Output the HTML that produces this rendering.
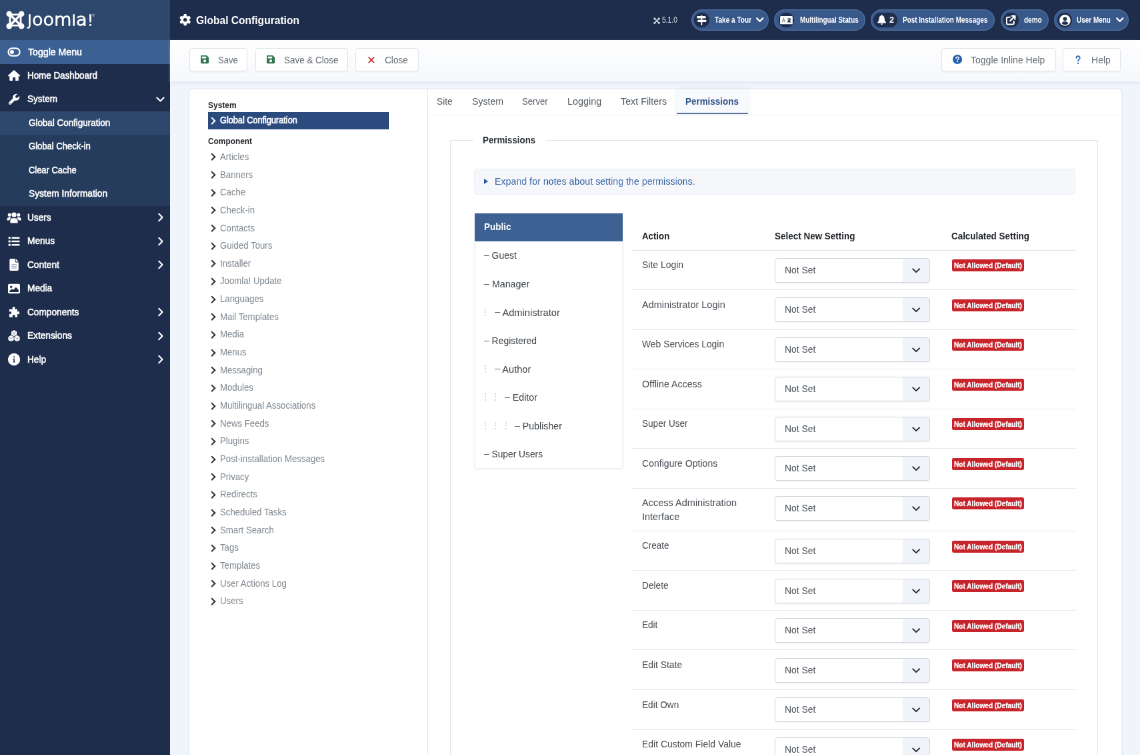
<!DOCTYPE html>
<html lang="en">
<head>
<meta charset="utf-8">
<title>Global Configuration - Administration</title>
<style>
*{box-sizing:border-box;margin:0;padding:0}
html,body{width:1140px;height:755px;overflow:hidden;background:#f0f4fb}
#app{position:absolute;left:0;top:0;width:1710px;height:1133px;overflow:hidden;transform:scale(.666667);transform-origin:0 0;will-change:transform;font-family:"Liberation Sans",Arial,sans-serif;font-size:15px;color:#495057;line-height:1.5}
ul{list-style:none}
svg{display:block;overflow:visible}
i{font-style:normal}
span,h3,.lab{transform-origin:0 50%}
span{display:inline-block}

/* ---------- header ---------- */
#header{position:absolute;left:0;top:0;width:1710px;height:60px;background:#1d2d4b;color:#fff}
#logo{position:absolute;left:0;top:0;width:255px;height:60px;background:#2e486d}
#logo svg{position:absolute;left:8.85px;top:16.2px}
#logo .word{position:absolute;left:41.1px;top:16.5px;font-family:"DejaVu Sans Light","DejaVu Sans",sans-serif;font-weight:200;font-size:24px;line-height:27px;color:#fff;-webkit-text-stroke:1.35px #fff;white-space:nowrap;transform:scaleX(1.13)}
#logo .word b{font-weight:200;font-size:20.7px}
#logo .reg{position:absolute;left:138.3px;top:19.8px;font-size:5.4px;line-height:6px;color:#dfe5ee}
#title{position:absolute;left:268.8px;top:1.05px;height:60px;display:flex;align-items:center;font-size:16.95px;font-weight:700;white-space:nowrap}
#title svg{margin-right:7.5px;position:relative;top:-0.9px}
.ver{position:absolute;left:979.5px;top:23.1px;height:15px;font-size:12px;line-height:15px;color:#e1e6ee;display:flex;align-items:center}
.ver svg{margin-right:3px}
.pill{position:absolute;top:13.95px;height:32.1px;border-radius:16.05px;background:#38588a;box-shadow:inset 0 0 0 1.5px rgba(130,160,205,.3);font-size:12.45px;font-weight:700;color:#fff;white-space:nowrap}
.pill .ic{position:absolute;left:4.5px;top:4.8px;height:22.5px;border-radius:11.25px;background:#1d2d4b;display:flex;align-items:center;justify-content:center}
.pill .ic b{font-size:12.9px;font-weight:700;margin-left:5.1px;line-height:22.5px}
.pill .tx{position:absolute;top:0;line-height:33px}
.pill .chev{position:absolute;right:7.8px;top:12.15px}

/* ---------- sidebar ---------- */
#sidebar{position:absolute;left:0;top:60px;width:255px;height:1072.5px;background:#1d2d4b;color:#fff}
#sidebar .row{position:relative;height:35.505px;font-size:14.7px;line-height:35.85px;white-space:nowrap;-webkit-text-stroke:0.6px #fff}
#sidebar .row span{position:absolute;top:0}
#sidebar .row.toggle{background:#3c6092;line-height:37.2px}
#sidebar .row.sub{background:#263c5c}
#sidebar .row.act{background:#2e486d}
#sidebar .row svg.i{position:absolute;left:21px;top:50%;transform:translate(-50%,-50%)}
#sidebar .row svg.c{position:absolute;top:50%;transform:translateY(-50%)}
#sidebar .row svg.cd{right:7.8px}
#sidebar .row svg.cr{right:9.9px}

/* ---------- subhead ---------- */
#subhead{position:absolute;left:255px;top:60px;width:1455px;height:61.5px;background:linear-gradient(#fff,#f6f8fc);box-shadow:0 1.5px 4.5px rgba(200,208,222,.4)}
.btn{position:absolute;top:12.45px;height:34.5px;border:1px solid #e0e4e9;border-radius:3.75px;background:#fff;color:#656c73;font-size:14.7px;line-height:34.2px;white-space:nowrap;box-shadow:0 1.5px 1.5px rgba(0,0,0,.035)}
.btn i{position:absolute}
.btn span{position:absolute;top:0}

/* ---------- main ---------- */
#card{position:absolute;left:283.5px;top:133.5px;width:1398px;height:1020px;background:#fff;border-radius:4.5px;box-shadow:0 0 3px rgba(190,200,215,.6)}
#left{position:absolute;left:0;top:0;width:358.5px;height:1020px;border-right:1px solid #e3e7ec}
#left h3{position:absolute;left:28.5px;font-size:13.35px;font-weight:700;color:#22262a;line-height:18px;white-space:nowrap}
#left .gc{position:absolute;left:28.5px;top:34.5px;width:271.5px;height:25.5px;background:#2b4a7e;color:#fff;font-size:13.995px;line-height:24.9px;padding-left:18.3px;white-space:nowrap;-webkit-text-stroke:0.675px #fff}
#left .gc:before{content:"";position:absolute;left:2.1px;top:9.45px;width:6.45px;height:6.45px;border-right:2.25px solid #fff;border-bottom:2.25px solid #fff;transform:rotate(-45deg);transform-origin:center}
#left ul{position:absolute;left:28.5px;top:89.4px}
#left li{position:relative;height:26.67px;line-height:24.9px;font-size:13.995px;color:#7d868e;padding-left:18.3px;white-space:nowrap}
#left li:before{content:"";position:absolute;left:2.1px;top:8.55px;width:6.45px;height:6.45px;border-right:2.025px solid #2c3136;border-bottom:2.025px solid #2c3136;transform:rotate(-45deg)}

#tabs{position:absolute;left:360px;top:0;width:1038px;height:39px;border-bottom:1px solid #edf0f4;font-size:15px}
#tabs span{position:absolute;top:0;line-height:36.6px;color:#545b62;white-space:nowrap}
#tabs span.on{color:#345489;font-weight:700}
#tabs .onbg{position:absolute;left:371.25px;top:0;width:106.95px;height:37.2px;background:#f8fafd;box-shadow:inset 0 -1.5px 0 #3a5888,0 0 4.5px rgba(200,210,225,.45)}

#fs{position:absolute;left:391.5px;top:76.5px;width:971.7px;height:1080px;border:1px solid #e0e4e9}
#fs .legend{position:absolute;left:33.75px;top:-15px;width:108px;height:27px;line-height:27.6px;padding-left:14.7px;background:#fff;font-size:15px;font-weight:700;color:#2a2f34;white-space:nowrap}
#det{position:absolute;left:34.5px;top:42.45px;width:902.4px;height:38.25px;background:#f5f7fb;border:1px solid #e9edf2;border-radius:4.5px;color:#3f68a5;font-size:15px;line-height:36.3px;padding-left:30px;white-space:nowrap}
#det:before{content:"";position:absolute;left:14.4px;top:13.8px;border-left:6.6px solid #24589f;border-top:4.05px solid transparent;border-bottom:4.05px solid transparent}

#groups{position:absolute;left:36px;top:109.95px;width:222.3px;height:381.6px;background:#fff;border:1px solid #eef0f3;border-radius:3px;box-shadow:0 0 3px rgba(200,205,215,.45)}
#groups .pub{position:absolute;left:-1.5px;top:-1.5px;width:222.6px;height:41.4px;background:#3d6192;color:#fff;font-weight:700;font-size:15px;line-height:39.9px;padding-left:14.1px;white-space:nowrap}
#groups ul{position:absolute;left:-1.2px;top:40.5px;width:222px}
#groups li{position:relative;height:42.585px;line-height:42.585px;font-size:15px;color:#3b4045;white-space:nowrap}
#groups li span{position:absolute;top:0}
#groups li i{position:absolute;top:0;color:#c3c8ce;font-size:13.5px;width:13.5px;text-align:center;margin-left:-6.3px}

#tbl{position:absolute;left:271.5px;top:108.15px;width:666.75px}
#tbl .th{position:relative;height:56.4px;border-bottom:1px solid #dfe3e8;font-weight:700;color:#22262a;font-size:15px;white-space:nowrap}
#tbl .th span{position:absolute;top:25.8px;line-height:18px}
#tbl .tr{position:relative;height:59.52px;border-bottom:1px solid #e5e8ec}
#tbl .tr.tall{height:64.32px}
#tbl .lab{position:absolute;left:15.45px;top:10.5px;font-size:15px;line-height:21.15px;color:#454b52;width:168px}
#tbl .lab span{display:block;width:max-content;white-space:nowrap}
#tbl .sel{position:absolute;left:214.65px;top:11.25px;width:232.8px;height:37.05px;border:1px solid #ced3d9;border-radius:3.75px;background:linear-gradient(90deg,#fff 0,#fff 190.8px,#f0f3f9 190.8px);font-size:15px;line-height:33.9px;padding-left:13.8px;color:#4a5057;white-space:nowrap;box-shadow:0 1.5px 1.5px rgba(0,0,0,.04)}
#tbl .sel svg{position:absolute;right:14.1px;top:13.95px}
#tbl .bdg{position:absolute;left:480px;top:13.8px;-webkit-text-stroke:0.3px #fff;height:18px;width:108.6px;border-radius:2.4px;background:#c7242b;color:#fff;font-size:11.25px;font-weight:700;line-height:18px;white-space:nowrap}
#tbl .bdg span{position:absolute;left:3.3px;top:0}
#groups li span u{text-decoration:none;position:relative;top:-1.35px;color:#5a6067}
</style>
</head>
<body>
<div id="app">

<header id="header">
  <div id="logo"><svg width="27.9" height="27.9" viewBox="0 0 20 20" aria-hidden="true"><g fill="none" stroke="#fff" stroke-linecap="round" stroke-linejoin="round"><path stroke-width="2.500" d="M4.4 4.4 L15.6 15.6 M15.6 4.4 L4.4 15.6"/><path stroke-width="2" d="M4.200 5 V15 M15.800 5 V15 M5 4.200 H15 M5 15.800 H15"/></g><g fill="#fff"><circle cx="3.400" cy="3.400" r="3.100"/><circle cx="16.600" cy="3.400" r="3.100"/><circle cx="3.400" cy="16.600" r="3.100"/><circle cx="16.600" cy="16.600" r="3.100"/></g></svg><span class="word"><b>J</b>oom<b>l</b>a<b>!</b></span><span class="reg">®</span></div>
  <div id="title"><svg width="17.4" height="17.4" viewBox="0 0 512 512" aria-hidden="true"><path fill="#fff" fill-rule="evenodd" d="M495.9 166.6c3.2 8.700.5 18.400-6.400 24.600l-43.300 39.400c1.100 8.300 1.700 16.800 1.700 25.400s-.6 17.100-1.700 25.400l43.300 39.400c6.900 6.200 9.600 15.900 6.400 24.600-4.400 11.900-9.700 23.300-15.800 34.300l-4.700 8.100c-6.600 11-14 21.400-22.100 31.200-5.900 7.200-15.700 9.600-24.500 6.800l-55.700-17.700c-13.400 10.300-28.200 18.900-44 25.400l-12.500 57.100c-2 9.100-9 16.300-18.200 17.800-13.800 2.300-28 3.500-42.500 3.500s-28.700-1.200-42.500-3.500c-9.200-1.500-16.200-8.700-18.200-17.800l-12.500-57.100c-15.800-6.500-30.600-15.100-44-25.400l-55.600 17.800c-8.800 2.800-18.600.3-24.500-6.800-8.100-9.800-15.500-20.200-22.100-31.200l-4.700-8.100c-6.100-11-11.400-22.400-15.800-34.300-3.200-8.700-.5-18.400 6.400-24.600l43.300-39.400C64.600 273.100 64 264.600 64 256s.6-17.100 1.700-25.400l-43.300-39.400c-6.900-6.200-9.600-15.900-6.400-24.600 4.400-11.900 9.700-23.300 15.800-34.300l4.700-8.100c6.600-11 14-21.400 22.100-31.200 5.900-7.200 15.700-9.600 24.500-6.800l55.700 17.700c13.400-10.300 28.200-18.900 44-25.400l12.500-57.100c2-9.100 9-16.300 18.200-17.800C227.300 1.200 241.500 0 256 0s28.700 1.200 42.500 3.500c9.200 1.500 16.200 8.700 18.200 17.800l12.500 57.100c15.800 6.500 30.600 15.100 44 25.400l55.700-17.700c8.800-2.800 18.600-.3 24.500 6.800 8.100 9.800 15.500 20.200 22.100 31.200l4.700 8.100c6.100 11 11.400 22.400 15.800 34.300zM256 336a80 80 0 1 0 0-160 80 80 0 1 0 0 160z"/></svg><span style="transform:scaleX(0.920)">Global Configuration</span></div>
  <div class="ver"><svg width="10.2" height="10.2" viewBox="0 0 20 20" aria-hidden="true"><g fill="none" stroke="#d0d6e0" stroke-width="3.4" stroke-linecap="round"><path d="M5 5 L15 15M15 5 L5 15"/></g><g fill="#d0d6e0"><circle cx="3.6" cy="3.6" r="3.2"/><circle cx="16.4" cy="3.6" r="3.2"/><circle cx="3.6" cy="16.4" r="3.2"/><circle cx="16.4" cy="16.4" r="3.2"/></g></svg><span style="transform:scaleX(0.860)">5.1.0</span></div>
  <div class="pill" style="left:1036.95px;width:116.1px"><span class="ic" style="left:4.5px;width:22.5px"><svg width="14.7" height="14.7" viewBox="0 0 16 16" aria-hidden="true"><g fill="#fff"><rect x="7" y="0" width="2" height="16" rx=".5"/><path d="M1 1.200 H13.600 L15.600 3 L13.600 4.800 H1 Q.4 4.800 .4 4.200 V1.800 Q.4 1.200 1 1.200Z"/><path d="M15 7.400 H2.400 L.4 9.200 L2.400 11 H15 Q15.600 11 15.600 10.400 V8 Q15.600 7.400 15 7.400Z"/></g></svg></span><span class="tx" style="left:35.25px;transform:scaleX(0.811)">Take a Tour</span><svg class="chev" width="11.4" height="7.05" viewBox="0 0 10 6" aria-hidden="true"><path d="M1 1l4 4 4-4" fill="none" stroke="#fff" stroke-width="2.1" stroke-linecap="round" stroke-linejoin="round"/></svg></div>
  <div class="pill" style="left:1161.3px;width:136.5px"><span class="ic" style="left:6.9px;width:22.5px"><svg width="18.9" height="12.3" viewBox="0 0 20 13" aria-hidden="true"><rect x="0" y="0" width="20" height="13" rx="1.600" fill="#fff"/><path d="M3.400 9.800 L5.600 3.600 L7.800 9.800 M4.200 7.800 H7" stroke="#8d97a8" stroke-width="1.300" fill="none"/><path d="M11.400 4.600 H17.400 M14.400 3 V4.600 M12 9.900 Q15.600 8.400 16.200 4.800 M12.600 6.400 Q13.800 9 16.900 9.900" stroke="#1d2d4b" stroke-width="1.500" fill="none"/></svg></span><span class="tx" style="left:38.7px;transform:scaleX(0.793)">Multilingual Status</span></div>
  <div class="pill" style="left:1305.9px;width:186px"><span class="ic" style="left:4.5px;width:36px"><svg width="13.2" height="15" viewBox="0 0 14 16" aria-hidden="true"><path fill="#fff" d="M7 0 Q7.900 0 7.900 .9 V1.400 Q11.300 2.200 11.300 6.200 Q11.300 9.700 13.500 11.600 Q14 12.100 14 12.500 Q14 13.300 13.100 13.300 H.9 Q0 13.300 0 12.500 Q0 12.100 .5 11.600 Q2.700 9.700 2.700 6.200 Q2.700 2.200 6.100 1.400 V.9 Q6.100 0 7 0Z"/><path fill="#fff" d="M5.200 14.200 H8.800 Q8.800 16 7 16 Q5.200 16 5.200 14.200Z"/></svg><b>2</b></span><span class="tx" style="left:48.6px;transform:scaleX(0.801)">Post Installation Messages</span></div>
  <div class="pill" style="left:1500.9px;width:72.3px"><span class="ic" style="left:4.5px;width:22.5px"><svg width="14.4" height="14.4" viewBox="0 0 16 16" aria-hidden="true"><path fill="none" stroke="#fff" stroke-width="2.300" stroke-linejoin="round" stroke-linecap="round" d="M6.500 3 H2.800 Q1 3 1 4.800 V13.200 Q1 15 2.800 15 H11.200 Q13 15 13 13.200 V9.800"/><path fill="none" stroke="#fff" stroke-width="2.500" stroke-linecap="round" stroke-linejoin="round" d="M9.600 1.100 H14.900 V6.400 M14.600 1.400 L7 9"/></svg></span><span class="tx" style="left:34.65px;transform:scaleX(0.804)">demo</span></div>
  <div class="pill" style="left:1581.45px;width:111.6px"><span class="ic" style="left:4.5px;width:22.5px"><svg width="16.8" height="16.8" viewBox="0 0 16 16" aria-hidden="true"><circle cx="8" cy="8" r="8" fill="#fff"/><circle cx="8" cy="6" r="2.700" fill="#1d2d4b"/><path d="M3.300 12.300 Q4.300 9.700 6.400 9.700 H9.600 Q11.700 9.700 12.700 12.300 Q10.800 14.400 8 14.400 Q5.200 14.400 3.300 12.300Z" fill="#1d2d4b"/></svg></span><span class="tx" style="left:34.05px;transform:scaleX(0.801)">User Menu</span><svg class="chev" width="11.4" height="7.05" viewBox="0 0 10 6" aria-hidden="true"><path d="M1 1l4 4 4-4" fill="none" stroke="#fff" stroke-width="2.1" stroke-linecap="round" stroke-linejoin="round"/></svg></div>
</header>

<nav id="sidebar">
  <div class="row toggle"><svg class="i" width="20.1" height="13.5" viewBox="0 0 23 16" aria-hidden="true"><rect x="1.300" y="1.300" width="20.400" height="13.400" rx="6.700" fill="none" stroke="#fff" stroke-width="2.600"/><circle cx="7.800" cy="8" r="3.600" fill="#fff"/></svg><span style="left:42.45px;transform:scaleX(0.962)">Toggle Menu</span></div>
  <div class="row "><svg class="i" width="19.2" height="17.4" viewBox="0 0 24 21.400" aria-hidden="true"><path fill="#fff" d="M12 .8 L23.3 10.600 Q23.900 11.300 23.300 11.900 L22.900 12.300 Q22.300 12.900 21.600 12.300 L20.500 11.300 V19.600 Q20.500 20.800 19.300 20.800 H14.600 V14.600 H9.400 V20.800 H4.700 Q3.500 20.800 3.500 19.600 V11.300 L2.400 12.300 Q1.700 12.900 1.100 12.300 L.7 11.900 Q.1 11.300 .7 10.600 Z"/><path fill="#fff" d="M12 3.600 L20.500 11 V11.300 H3.500 V11 Z"/></svg><span style="left:40.8px;transform:scaleX(0.911)">Home Dashboard</span></div>
  <div class="row "><svg class="i" width="18.3" height="18.3" viewBox="0 0 16.400 16.400" aria-hidden="true"><path fill="#fff" d="M15.300 3.600 l-2.800 2.800 -2.100-.5 -.5-2.100 2.800-2.800 A4.800 4.800 0 0 0 6.600 6.900 L1.400 12.100 a1.900 1.900 0 0 0 2.700 2.700 l5.200-5.200 A4.800 4.800 0 0 0 15.300 3.600z"/><circle cx="2.800" cy="13.400" r=".7" fill="#1d2d4b"/></svg><span style="left:40.8px;transform:scaleX(0.918)">System</span><svg class="c cd" width="12.9" height="7.8" viewBox="0 0 10 6" aria-hidden="true"><path d="M1 1l4 4 4-4" fill="none" stroke="#fff" stroke-width="1.7" stroke-linecap="round" stroke-linejoin="round"/></svg></div>
  <div class="row sub act"><span style="left:42.6px;transform:scaleX(0.913)">Global Configuration</span></div>
  <div class="row sub"><span style="left:42.6px;transform:scaleX(0.888)">Global Check-in</span></div>
  <div class="row sub"><span style="left:42.6px;transform:scaleX(0.879)">Clear Cache</span></div>
  <div class="row sub"><span style="left:42.6px;transform:scaleX(0.933)">System Information</span></div>
  <div class="row "><svg class="i" width="21.3" height="16.8" viewBox="0 0 24 19" aria-hidden="true"><g fill="#fff"><circle cx="4.300" cy="5.200" r="2.900"/><circle cx="19.700" cy="5.200" r="2.900"/><circle cx="12" cy="5" r="4.100"/><path d="M0 14.500 V13 Q0 9.500 3.200 9.500 H5.600 Q6.800 9.500 7.700 10.100 Q4.700 11.600 4.300 14.500Z"/><path d="M24 14.500 V13 Q24 9.500 20.800 9.500 H18.400 Q17.200 9.500 16.300 10.100 Q19.300 11.600 19.700 14.500Z"/><path d="M5.600 19 V15.600 Q5.600 10.800 10.200 10.800 H13.800 Q18.400 10.800 18.400 15.600 V19Z"/></g></svg><span style="left:40.8px;transform:scaleX(0.930)">Users</span><svg class="c cr" width="7.8" height="12.9" viewBox="0 0 6 10" aria-hidden="true"><path d="M1 1l4 4-4 4" fill="none" stroke="#fff" stroke-width="1.7" stroke-linecap="round" stroke-linejoin="round"/></svg></div>
  <div class="row "><svg class="i" width="16.8" height="14.4" viewBox="0 0 16 13" aria-hidden="true"><g fill="#fff"><rect x="0" y="0" width="3" height="3" rx=".5"/><rect x="0" y="5" width="3" height="3" rx=".5"/><rect x="0" y="10" width="3" height="3" rx=".5"/><rect x="4.600" y=".4" width="11.400" height="2.200" rx=".5"/><rect x="4.600" y="5.400" width="11.400" height="2.200" rx=".5"/><rect x="4.600" y="10.400" width="11.400" height="2.200" rx=".5"/></g></svg><span style="left:40.8px;transform:scaleX(0.930)">Menus</span><svg class="c cr" width="7.8" height="12.9" viewBox="0 0 6 10" aria-hidden="true"><path d="M1 1l4 4-4 4" fill="none" stroke="#fff" stroke-width="1.7" stroke-linecap="round" stroke-linejoin="round"/></svg></div>
  <div class="row "><svg class="i" width="13.8" height="18" viewBox="0 0 12 16" aria-hidden="true"><path fill="#fff" d="M1.500 0 H7.200 V3.600 Q7.200 4.800 8.400 4.800 H12 V14.500 Q12 16 10.500 16 H1.500 Q0 16 0 14.500 V1.500 Q0 0 1.500 0Z M8.200 0 L12 3.800 H8.200Z"/><g fill="#9aa6ba"><rect x="2.500" y="7.200" width="7" height="1"/><rect x="2.500" y="9.600" width="7" height="1"/><rect x="2.500" y="12" width="7" height="1"/></g></svg><span style="left:40.8px;transform:scaleX(0.930)">Content</span><svg class="c cr" width="7.8" height="12.9" viewBox="0 0 6 10" aria-hidden="true"><path d="M1 1l4 4-4 4" fill="none" stroke="#fff" stroke-width="1.7" stroke-linecap="round" stroke-linejoin="round"/></svg></div>
  <div class="row "><svg class="i" width="18" height="15.3" viewBox="0 0 16 13" aria-hidden="true"><rect x="0" y="0" width="16" height="13" rx="1.800" fill="#fff"/><circle cx="4.200" cy="4" r="1.500" fill="#1d2d4b"/><path fill="#1d2d4b" d="M2 11 V9.500 L5 6.500 L6.800 8.300 L10.500 4.500 L14 8 V11Z"/></svg><span style="left:40.8px;transform:scaleX(0.930)">Media</span></div>
  <div class="row "><svg class="i" width="17.4" height="17.1" viewBox="0 0 16.500 14.500" aria-hidden="true"><path fill="#fff" d="M6.400 3.200 C6.400 2.400 5.800 2.200 5.800 1.500 C5.800 .6 6.700 0 7.800 0 C8.900 0 9.800 .6 9.800 1.500 C9.800 2.200 9.200 2.400 9.200 3.200 H13 V7 C13.800 7 14 6.400 14.700 6.400 C15.500 6.400 16 7.300 16 8.400 C16 9.500 15.500 10.400 14.700 10.400 C14 10.400 13.800 9.800 13 9.800 V14.500 H9.300 C9.300 13.700 9.900 13.500 9.900 12.800 C9.900 12 9 11.500 7.900 11.500 C6.800 11.500 5.900 12 5.900 12.800 C5.900 13.500 6.500 13.700 6.500 14.500 H1.500 V9.700 C2.300 9.700 2.500 10.300 3.200 10.300 C4 10.300 4.500 9.400 4.500 8.400 C4.500 7.400 4 6.500 3.200 6.500 C2.500 6.500 2.300 7.100 1.500 7.100 V3.200Z"/></svg><span style="left:40.8px;transform:scaleX(0.930)">Components</span><svg class="c cr" width="7.8" height="12.9" viewBox="0 0 6 10" aria-hidden="true"><path d="M1 1l4 4-4 4" fill="none" stroke="#fff" stroke-width="1.7" stroke-linecap="round" stroke-linejoin="round"/></svg></div>
  <div class="row "><svg class="i" width="19.2" height="17.4" viewBox="0 0 20 18" aria-hidden="true"><polygon points="10.00,0.60 13.46,2.60 13.46,6.60 10.00,8.60 6.54,6.60 6.54,2.60" fill="#fff" stroke="#fff" stroke-width="1.6" stroke-linejoin="round"/><path d="M7.14 3.00 L10.00 4.80 L12.86 3.00 M10.00 4.80 V8.10" stroke="#1d2d4b" stroke-width=".7" stroke-opacity=".75" fill="none"/><polygon points="5.30,8.70 8.76,10.70 8.76,14.70 5.30,16.70 1.84,14.70 1.84,10.70" fill="#fff" stroke="#fff" stroke-width="1.6" stroke-linejoin="round"/><path d="M2.44 11.10 L5.30 12.90 L8.16 11.10 M5.30 12.90 V16.20" stroke="#1d2d4b" stroke-width=".7" stroke-opacity=".75" fill="none"/><polygon points="14.70,8.70 18.16,10.70 18.16,14.70 14.70,16.70 11.24,14.70 11.24,10.70" fill="#fff" stroke="#fff" stroke-width="1.6" stroke-linejoin="round"/><path d="M11.84 11.10 L14.70 12.90 L17.56 11.10 M14.70 12.90 V16.20" stroke="#1d2d4b" stroke-width=".7" stroke-opacity=".75" fill="none"/></svg><span style="left:40.8px;transform:scaleX(0.930)">Extensions</span><svg class="c cr" width="7.8" height="12.9" viewBox="0 0 6 10" aria-hidden="true"><path d="M1 1l4 4-4 4" fill="none" stroke="#fff" stroke-width="1.7" stroke-linecap="round" stroke-linejoin="round"/></svg></div>
  <div class="row "><svg class="i" width="18.3" height="18.3" viewBox="0 0 16 16" aria-hidden="true"><circle cx="8" cy="8" r="8" fill="#fff"/><circle cx="8" cy="4.800" r=".95" fill="#1d2d4b"/><path d="M6.800 7 H8.700 V11 H9.400 V12 H6.600 V11 H7.300 V8 H6.800Z" fill="#1d2d4b"/></svg><span style="left:40.8px;transform:scaleX(0.930)">Help</span><svg class="c cr" width="7.8" height="12.9" viewBox="0 0 6 10" aria-hidden="true"><path d="M1 1l4 4-4 4" fill="none" stroke="#fff" stroke-width="1.7" stroke-linecap="round" stroke-linejoin="round"/></svg></div>
</nav>


<div id="subhead">
  <div class="btn" style="left:29.25px;width:87px"><i style="left:15.45px;top:9.3px"><svg width="12.15" height="12.15" viewBox="0 0 16 16" aria-hidden="true"><path fill="#337650" fill-rule="evenodd" d="M1.800 0 H11.300 Q11.900 0 12.400 .5 L15.500 3.600 Q16 4.100 16 4.700 V14.200 Q16 16 14.200 16 H1.800 Q0 16 0 14.200 V1.800 Q0 0 1.800 0Z M2.300 2.300 V6 H10.800 V2.300Z M8 8.300 A2.700 2.700 0 1 0 8 13.700 A2.700 2.700 0 1 0 8 8.300Z"/></svg></i><span style="left:41.7px;transform:scaleX(0.891)">Save</span></div>
  <div class="btn" style="left:127.95px;width:139.5px"><i style="left:16.35px;top:9.3px"><svg width="12.15" height="12.15" viewBox="0 0 16 16" aria-hidden="true"><path fill="#337650" fill-rule="evenodd" d="M1.800 0 H11.300 Q11.900 0 12.400 .5 L15.500 3.600 Q16 4.100 16 4.700 V14.200 Q16 16 14.200 16 H1.800 Q0 16 0 14.200 V1.800 Q0 0 1.800 0Z M2.300 2.300 V6 H10.800 V2.300Z M8 8.300 A2.700 2.700 0 1 0 8 13.700 A2.700 2.700 0 1 0 8 8.300Z"/></svg></i><span style="left:42px;transform:scaleX(0.916)">Save &amp; Close</span></div>
  <div class="btn" style="left:278.25px;width:94.8px"><i style="left:18px;top:11.1px"><svg width="9.9" height="9.9" viewBox="0 0 10 10" aria-hidden="true"><path d="M1.200 1.200 L8.800 8.800 M8.800 1.200 L1.200 8.800" stroke="#c52827" stroke-width="1.700" stroke-linecap="round"/></svg></i><span style="left:42.75px;transform:scaleX(0.930)">Close</span></div>
  <div class="btn" style="left:1157.4px;width:171.3px"><i style="left:15.15px;top:9px"><svg width="14.1" height="14.1" viewBox="0 0 16 16" aria-hidden="true"><circle cx="8" cy="8" r="8" fill="#2360b0"/><path d="M5.600 6.100 Q5.700 3.800 8 3.800 Q10.400 3.800 10.400 5.900 Q10.400 7.200 9.100 7.900 Q8.100 8.400 8.100 9.500" stroke="#fff" stroke-width="1.700" fill="none" stroke-linecap="round"/><circle cx="8.100" cy="12" r="1.100" fill="#fff"/></svg></i><span style="left:42.6px;transform:scaleX(0.954)">Toggle Inline Help</span></div>
  <div class="btn" style="left:1339.2px;width:87px"><i style="left:17.7px;top:9.3px"><svg width="8.1" height="13.5" viewBox="0 0 8 13" aria-hidden="true"><path d="M1.300 3.600 Q1.400 1 4 1 Q6.700 1 6.700 3.500 Q6.700 5 5.200 5.900 Q4 6.600 4 8.300" stroke="#2a69b8" stroke-width="1.700" fill="none" stroke-linecap="round"/><circle cx="4" cy="11.600" r="1.150" fill="#2a69b8"/></svg></i><span style="left:41.7px;transform:scaleX(0.958)">Help</span></div>
</div>


<main id="card">

  <div id="left">
    <h3 style="top:15px;transform:scaleX(0.897)">System</h3>
    <div class="gc"><span style="transform:scaleX(0.908)">Global Configuration</span></div>
    <h3 style="top:69px;transform:scaleX(0.890)">Component</h3>
    <ul>
      <li><span style="transform:scaleX(0.945)">Articles</span></li>
      <li><span style="transform:scaleX(0.945)">Banners</span></li>
      <li><span style="transform:scaleX(0.945)">Cache</span></li>
      <li><span style="transform:scaleX(0.945)">Check-in</span></li>
      <li><span style="transform:scaleX(0.945)">Contacts</span></li>
      <li><span style="transform:scaleX(0.945)">Guided Tours</span></li>
      <li><span style="transform:scaleX(0.945)">Installer</span></li>
      <li><span style="transform:scaleX(0.945)">Joomla! Update</span></li>
      <li><span style="transform:scaleX(0.945)">Languages</span></li>
      <li><span style="transform:scaleX(0.945)">Mail Templates</span></li>
      <li><span style="transform:scaleX(0.945)">Media</span></li>
      <li><span style="transform:scaleX(0.945)">Menus</span></li>
      <li><span style="transform:scaleX(0.945)">Messaging</span></li>
      <li><span style="transform:scaleX(0.945)">Modules</span></li>
      <li><span style="transform:scaleX(0.945)">Multilingual Associations</span></li>
      <li><span style="transform:scaleX(0.945)">News Feeds</span></li>
      <li><span style="transform:scaleX(0.945)">Plugins</span></li>
      <li><span style="transform:scaleX(0.945)">Post-installation Messages</span></li>
      <li><span style="transform:scaleX(0.945)">Privacy</span></li>
      <li><span style="transform:scaleX(0.945)">Redirects</span></li>
      <li><span style="transform:scaleX(0.945)">Scheduled Tasks</span></li>
      <li><span style="transform:scaleX(0.945)">Smart Search</span></li>
      <li><span style="transform:scaleX(0.945)">Tags</span></li>
      <li><span style="transform:scaleX(0.945)">Templates</span></li>
      <li><span style="transform:scaleX(0.945)">User Actions Log</span></li>
      <li><span style="transform:scaleX(0.945)">Users</span></li>
    </ul>
  </div>

  <div id="tabs"><div class="onbg"></div><span class="" style="left:11.55px;transform:scaleX(0.917)">Site</span><span class="" style="left:64.05px;transform:scaleX(0.939)">System</span><span class="" style="left:139.8px;transform:scaleX(0.876)">Server</span><span class="" style="left:207.6px;transform:scaleX(0.958)">Logging</span><span class="" style="left:287.25px;transform:scaleX(0.952)">Text Filters</span><span class="on" style="left:384.75px;transform:scaleX(0.896)">Permissions</span></div>
  <div id="fs">
    <div class="legend"><span style="transform:scaleX(0.888)">Permissions</span></div>
    <div id="det"><span style="transform:scaleX(0.949)">Expand for notes about setting the permissions.</span></div>

    <div id="groups">
      <div class="pub"><span style="transform:scaleX(0.897)">Public</span></div>
      <ul>
        <li><span style="left:14.4px;transform:scaleX(0.928)"><u>–</u> Guest</span></li>
        <li><span style="left:14.4px;transform:scaleX(0.950)"><u>–</u> Manager</span></li>
        <li><i style="left:15.6px">⋮</i><span style="left:29.7px;transform:scaleX(0.978)"><u>–</u> Administrator</span></li>
        <li><span style="left:14.4px;transform:scaleX(0.928)"><u>–</u> Registered</span></li>
        <li><i style="left:15.6px">⋮</i><span style="left:29.7px;transform:scaleX(0.972)"><u>–</u> Author</span></li>
        <li><i style="left:15.6px">⋮</i><i style="left:30.9px">⋮</i><span style="left:45px;transform:scaleX(0.946)"><u>–</u> Editor</span></li>
        <li><i style="left:15.6px">⋮</i><i style="left:30.9px">⋮</i><i style="left:46.2px">⋮</i><span style="left:60.3px;transform:scaleX(0.945)"><u>–</u> Publisher</span></li>
        <li><span style="left:14.4px;transform:scaleX(0.918)"><u>–</u> Super Users</span></li>
      </ul>
    </div>


    <div id="tbl">
      <div class="th"><span style="left:15.45px;transform:scaleX(0.884)">Action</span><span style="left:214.65px;transform:scaleX(0.898)">Select New Setting</span><span style="left:479.4px;transform:scaleX(0.894)">Calculated Setting</span></div>
      <div class="tr"><div class="lab"><span style="transform:scaleX(0.931)">Site Login</span></div><div class="sel"><span style="transform:scaleX(0.927)">Not Set</span><svg class="sc" width="12.3" height="7.5" viewBox="0 0 10 6" aria-hidden="true"><path d="M1 1l4 4 4-4" fill="none" stroke="#22262a" stroke-width="1.5" stroke-linecap="round" stroke-linejoin="round"/></svg></div><div class="bdg"><span style="transform:scaleX(0.899)">Not Allowed (Default)</span></div></div>
      <div class="tr"><div class="lab"><span style="transform:scaleX(0.965)">Administrator Login</span></div><div class="sel"><span style="transform:scaleX(0.927)">Not Set</span><svg class="sc" width="12.3" height="7.5" viewBox="0 0 10 6" aria-hidden="true"><path d="M1 1l4 4 4-4" fill="none" stroke="#22262a" stroke-width="1.5" stroke-linecap="round" stroke-linejoin="round"/></svg></div><div class="bdg"><span style="transform:scaleX(0.899)">Not Allowed (Default)</span></div></div>
      <div class="tr"><div class="lab"><span style="transform:scaleX(0.925)">Web Services Login</span></div><div class="sel"><span style="transform:scaleX(0.927)">Not Set</span><svg class="sc" width="12.3" height="7.5" viewBox="0 0 10 6" aria-hidden="true"><path d="M1 1l4 4 4-4" fill="none" stroke="#22262a" stroke-width="1.5" stroke-linecap="round" stroke-linejoin="round"/></svg></div><div class="bdg"><span style="transform:scaleX(0.899)">Not Allowed (Default)</span></div></div>
      <div class="tr"><div class="lab"><span style="transform:scaleX(0.948)">Offline Access</span></div><div class="sel"><span style="transform:scaleX(0.927)">Not Set</span><svg class="sc" width="12.3" height="7.5" viewBox="0 0 10 6" aria-hidden="true"><path d="M1 1l4 4 4-4" fill="none" stroke="#22262a" stroke-width="1.5" stroke-linecap="round" stroke-linejoin="round"/></svg></div><div class="bdg"><span style="transform:scaleX(0.899)">Not Allowed (Default)</span></div></div>
      <div class="tr"><div class="lab"><span style="transform:scaleX(0.904)">Super User</span></div><div class="sel"><span style="transform:scaleX(0.927)">Not Set</span><svg class="sc" width="12.3" height="7.5" viewBox="0 0 10 6" aria-hidden="true"><path d="M1 1l4 4 4-4" fill="none" stroke="#22262a" stroke-width="1.5" stroke-linecap="round" stroke-linejoin="round"/></svg></div><div class="bdg"><span style="transform:scaleX(0.899)">Not Allowed (Default)</span></div></div>
      <div class="tr"><div class="lab"><span style="transform:scaleX(0.937)">Configure Options</span></div><div class="sel"><span style="transform:scaleX(0.927)">Not Set</span><svg class="sc" width="12.3" height="7.5" viewBox="0 0 10 6" aria-hidden="true"><path d="M1 1l4 4 4-4" fill="none" stroke="#22262a" stroke-width="1.5" stroke-linecap="round" stroke-linejoin="round"/></svg></div><div class="bdg"><span style="transform:scaleX(0.899)">Not Allowed (Default)</span></div></div>
      <div class="tr tall"><div class="lab"><span style="transform:scaleX(0.968)">Access Administration</span> <span style="transform:scaleX(0.964)">Interface</span></div><div class="sel"><span style="transform:scaleX(0.927)">Not Set</span><svg class="sc" width="12.3" height="7.5" viewBox="0 0 10 6" aria-hidden="true"><path d="M1 1l4 4 4-4" fill="none" stroke="#22262a" stroke-width="1.5" stroke-linecap="round" stroke-linejoin="round"/></svg></div><div class="bdg"><span style="transform:scaleX(0.899)">Not Allowed (Default)</span></div></div>
      <div class="tr"><div class="lab"><span style="transform:scaleX(0.903)">Create</span></div><div class="sel"><span style="transform:scaleX(0.927)">Not Set</span><svg class="sc" width="12.3" height="7.5" viewBox="0 0 10 6" aria-hidden="true"><path d="M1 1l4 4 4-4" fill="none" stroke="#22262a" stroke-width="1.5" stroke-linecap="round" stroke-linejoin="round"/></svg></div><div class="bdg"><span style="transform:scaleX(0.899)">Not Allowed (Default)</span></div></div>
      <div class="tr"><div class="lab"><span style="transform:scaleX(0.913)">Delete</span></div><div class="sel"><span style="transform:scaleX(0.927)">Not Set</span><svg class="sc" width="12.3" height="7.5" viewBox="0 0 10 6" aria-hidden="true"><path d="M1 1l4 4 4-4" fill="none" stroke="#22262a" stroke-width="1.5" stroke-linecap="round" stroke-linejoin="round"/></svg></div><div class="bdg"><span style="transform:scaleX(0.899)">Not Allowed (Default)</span></div></div>
      <div class="tr"><div class="lab"><span style="transform:scaleX(0.905)">Edit</span></div><div class="sel"><span style="transform:scaleX(0.927)">Not Set</span><svg class="sc" width="12.3" height="7.5" viewBox="0 0 10 6" aria-hidden="true"><path d="M1 1l4 4 4-4" fill="none" stroke="#22262a" stroke-width="1.5" stroke-linecap="round" stroke-linejoin="round"/></svg></div><div class="bdg"><span style="transform:scaleX(0.899)">Not Allowed (Default)</span></div></div>
      <div class="tr"><div class="lab"><span style="transform:scaleX(0.925)">Edit State</span></div><div class="sel"><span style="transform:scaleX(0.927)">Not Set</span><svg class="sc" width="12.3" height="7.5" viewBox="0 0 10 6" aria-hidden="true"><path d="M1 1l4 4 4-4" fill="none" stroke="#22262a" stroke-width="1.5" stroke-linecap="round" stroke-linejoin="round"/></svg></div><div class="bdg"><span style="transform:scaleX(0.899)">Not Allowed (Default)</span></div></div>
      <div class="tr"><div class="lab"><span style="transform:scaleX(0.907)">Edit Own</span></div><div class="sel"><span style="transform:scaleX(0.927)">Not Set</span><svg class="sc" width="12.3" height="7.5" viewBox="0 0 10 6" aria-hidden="true"><path d="M1 1l4 4 4-4" fill="none" stroke="#22262a" stroke-width="1.5" stroke-linecap="round" stroke-linejoin="round"/></svg></div><div class="bdg"><span style="transform:scaleX(0.899)">Not Allowed (Default)</span></div></div>
      <div class="tr"><div class="lab"><span style="transform:scaleX(0.930)">Edit Custom Field Value</span></div><div class="sel"><span style="transform:scaleX(0.927)">Not Set</span><svg class="sc" width="12.3" height="7.5" viewBox="0 0 10 6" aria-hidden="true"><path d="M1 1l4 4 4-4" fill="none" stroke="#22262a" stroke-width="1.5" stroke-linecap="round" stroke-linejoin="round"/></svg></div><div class="bdg"><span style="transform:scaleX(0.899)">Not Allowed (Default)</span></div></div>
    </div>

  </div>
</main>

</div>
</body>
</html>
